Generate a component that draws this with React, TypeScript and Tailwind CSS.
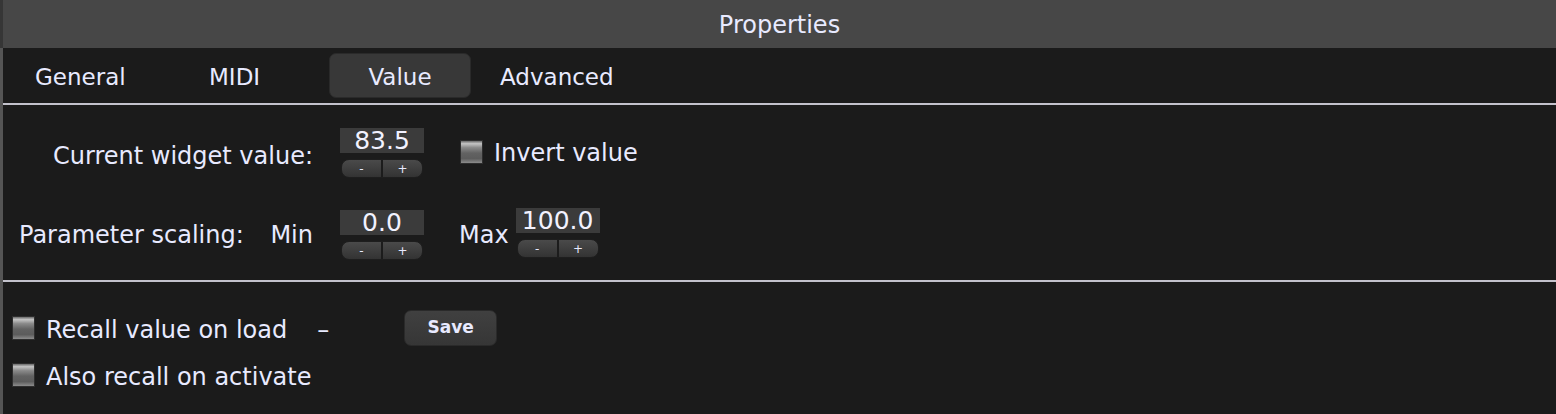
import React from "react";

const font = "font-['DejaVu_Sans',_'Liberation_Sans',_sans-serif]";

const Checkbox = () => (
  <div className="w-[23px] h-[24px] shrink-0 border border-[#2e2e2e] bg-[linear-gradient(to_bottom,#6a6a6a_0%,#c4c4c4_12%,#8a8a8a_30%,#626262_55%,#5c5c5c_80%,#8c8c8c_100%)]" />
);

const Stepper = () => (
  <div className="flex w-[82px] h-[19px] rounded-[8px] border border-[#1e1e1e] bg-[linear-gradient(to_bottom,#4a4a4a,#333333)] overflow-hidden text-[12px] leading-none text-[#e8eaff]">
    <div className="flex-1 flex items-center justify-center border-r-2 border-[#1c1c1c]">-</div>
    <div className="flex-1 flex items-center justify-center">+</div>
  </div>
);

const NumberBox = ({ value }: { value: string }) => (
  <div className="flex flex-col items-center gap-[6px]">
    <div className="w-[84px] h-[25px] bg-[#3b3b3b] flex items-center justify-center text-[25px] leading-none text-[#f2f2ff]">
      {value}
    </div>
    <Stepper />
  </div>
);

const tabs = ["General", "MIDI", "Value", "Advanced"];

export default function App() {
  return (
    <div className={`${font} w-[1556px] h-[414px] bg-[#1b1b1b] text-[#e8eaff] flex flex-col overflow-hidden`}>
      <div className="h-[48px] bg-[#474747] border-l-[3px] border-[#363636] flex items-center justify-center text-[24px] pt-[2px]">
        Properties
      </div>
      <div className="flex-1 border-l-[3px] border-[#555555] flex flex-col">
        {/* tabs */}
        <div className="h-[55px] flex items-center pl-[32px] text-[23px] pt-[3px]">
          <div className="w-[174px]">{tabs[0]}</div>
          <div className="w-[120px]">{tabs[1]}</div>
          <div className="w-[142px] h-[45px] rounded-[7px] border border-[#2a2a2a] bg-[#383838] flex items-center justify-center -mt-[3px] pt-[3px]">
            {tabs[2]}
          </div>
          <div className="ml-[29px]">{tabs[3]}</div>
        </div>
        <div className="h-[2px] bg-[#c3c2cc]" />

        {/* value rows */}
        <div className="h-[175px] flex flex-col pt-[23px] gap-[30px] text-[24px]">
          <div className="flex items-center">
            <div className="w-[310px] text-right pt-[5px]">Current widget value:</div>
            <div className="ml-[27px]">
              <NumberBox value="83.5" />
            </div>
            <div className="ml-[36px] flex items-center gap-[11px] mb-[2px]">
              <Checkbox />
              <span className="pt-[2px]">Invert value</span>
            </div>
          </div>
          <div className="flex items-center">
            <div className="w-[310px] pl-[16px] flex justify-between">
              <span>Parameter scaling:</span>
              <span>Min</span>
            </div>
            <div className="ml-[27px]">
              <NumberBox value="0.0" />
            </div>
            <div className="ml-[35px]">Max</div>
            <div className="ml-[7px] mb-[4px]">
              <NumberBox value="100.0" />
            </div>
          </div>
        </div>
        <div className="h-[2px] bg-[#c3c2cc]" />

        {/* recall rows */}
        <div className="flex flex-col pt-[28px] pl-[9px] text-[24px]">
          <div className="flex items-center h-[36px]">
            <Checkbox />
            <span className="ml-[11px] pt-[3px]">Recall value on load</span>
            <span className="ml-[30px] pt-[3px]">–</span>
            <button className="ml-[75px] w-[93px] h-[36px] rounded-[7px] border border-[#2a2a2a] bg-[linear-gradient(to_bottom,#404040,#363636)] text-[17px] font-bold text-[#e8eaff]">
              Save
            </button>
          </div>
          <div className="flex items-center h-[24px] mt-[17px]">
            <Checkbox />
            <span className="ml-[11px] pt-[3px]">Also recall on activate</span>
          </div>
        </div>
      </div>
    </div>
  );
}
